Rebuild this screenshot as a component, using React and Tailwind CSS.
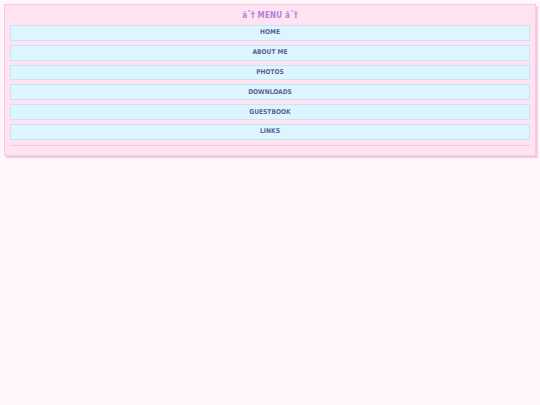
export default function App() {
  const items = ["HOME", "ABOUT ME", "PHOTOS", "DOWNLOADS", "GUESTBOOK", "LINKS"];
  return (
    <div className="min-h-screen w-full bg-[#fff6fc] p-1" style={{ fontFamily: '"DejaVu Sans Condensed", "DejaVu Sans", sans-serif' }}>
      <div className="border border-[#f6c9e4] bg-[#ffe3f1] shadow-[2px_2px_0_#f0cde3]">
        <div className="flex h-5 items-center justify-center pt-px text-[8px] font-bold tracking-[0.2px] text-[#b47fdc]">
          â˜† MENU â˜†
        </div>
        <div className="flex flex-col gap-1 px-[5px]">
          {items.map((it) => (
            <div
              key={it}
              className="flex h-[15.8px] items-center justify-center border border-[#cbe4f4] bg-[#dcf6ff] pt-px text-[6.6px] font-bold text-[#615e92]"
            >
              {it}
            </div>
          ))}
          <div className="mt-px border-t border-[#f3c8e0]" />
        </div>
        <div className="h-[9px]" />
      </div>
    </div>
  );
}
